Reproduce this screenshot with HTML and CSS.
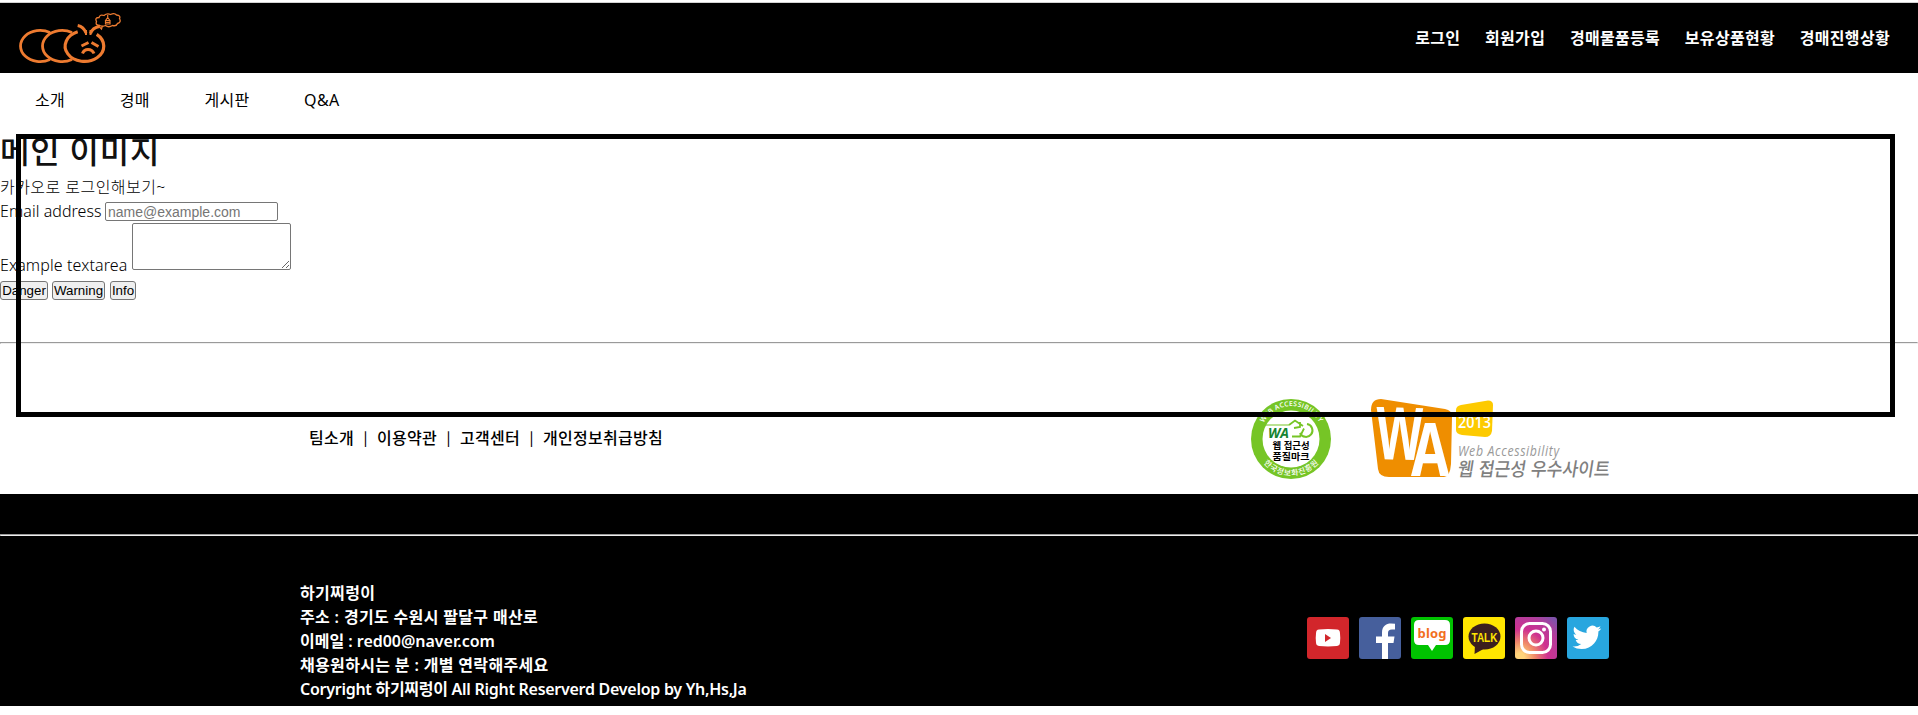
FILE: index.html
```html
<!DOCTYPE html>
<html lang="ko">
<head>
<meta charset="utf-8">
<title>하기찌렁이</title>
<link rel="stylesheet" href="styles.css">
</head>
<body>
<header class="topbar">
  <svg class="logo" width="104" height="56" viewBox="0 0 104 56" fill="none" stroke="#ee7b30" stroke-width="2.8">
    <path d="M32 47.400A19.500 15.600 0 1 1 32 20.600"/>
    <path d="M54 47.400A19.500 15.600 0 1 1 54 20.600"/>
    <path d="M59.700 19.800A19.300 15.300 0 1 0 78.700 22.300" stroke-width="3.200"/>
    <path d="M59.700 13.500q6 1.200 8.300 7.500M81.500 14.500q-7 1-9 7" stroke-width="3"/>
    <path d="M68 18v5M72.500 18v5" stroke-width="2"/>
    <path d="M63.500 34l7-3.500M73.500 30.500l7 4M64.500 41.500c2-5.500 9-5.500 11.500 0" stroke-width="3"/>
    <path d="M82 13.500q-5 0-3.500-4-2-4 2.500-4 1-3.500 5-2 3-2.500 6.500-1 4-2 6 .500 4.500 .500 3 3.500 2 4-2 5-1 3-5 2-4 2.500-7 0-3 1.500-5.500 0M80.500 14l3 3 1-3.500" stroke-width="1.300"/>
    <path d="M87.500 8.500h4.500v3.500h-4.500zM89.700 3v2.500l-2.200 3M89.700 5.500l2.300 3M88 10.300h4" stroke-width="1.200"/>
  </svg>
  <nav class="user-nav"><a>로그인</a><a>회원가입</a><a>경매물품등록</a><a>보유상품현황</a><a>경매진행상황</a></nav>
</header>
<nav class="main-nav"><a>소개</a><a>경매</a><a>게시판</a><a>Q&amp;A</a></nav>
<div class="frame"></div>
<main class="content">
  <h1 class="title">메인 이미지</h1>
  <p class="kakao">카카오로 로그인해보기~</p>
  <div class="row"><label class="email-label">Email address</label><input class="email" type="email" placeholder="name@example.com"></div>
  <div class="row area-row"><label class="area-label">Example textarea</label><textarea class="area"></textarea></div>
  <div class="buttons"><button class="btn danger">Danger</button><button class="btn warning">Warning</button><button class="btn info">Info</button></div>
</main>
<hr class="rule">
<section class="policies">
  <div class="links"><a>팀소개</a><i>|</i><a>이용약관</a><i>|</i><a>고객센터</a><i>|</i><a>개인정보취급방침</a></div>
  <div class="marks">
    <svg class="mark-round" width="80" height="80" viewBox="0 0 80 80">
      <circle cx="40" cy="40" r="40" fill="#76c526"/><circle cx="40" cy="40" r="28.500" fill="#fff"/>
      <path id="arc-top" d="M12.950 53.700A31.500 31.500 0 1 1 69 52" fill="none"/>
      <path id="arc-bottom" d="M9.500 60.500A36.800 36.800 0 0 0 70.500 60.500" fill="none"/>
      <text class="ring"><textPath href="#arc-top" startOffset="31" textLength="68">WEB ACCESSIBILITY</textPath></text>
      <text class="ring ring-ko"><textPath href="#arc-bottom" startOffset="5" textLength="62">한국정보화진흥원</textPath></text>
      <path d="M15 26h23" stroke="#76c526"/>
      <path d="M38 26l6-4.500 8 5.500M49 23v5l-6 1M41 37.500h8l4-8" fill="none" stroke="#76c526" stroke-width="1.800"/>
      <path d="M56 25a6.500 6.500 0 1 1-7 9" fill="none" stroke="#76c526" stroke-width="2"/>
      <text class="wa-small" x="17" y="39" textLength="21" lengthAdjust="spacingAndGlyphs">WA</text>
      <text class="mark-ko" x="21.500" y="50.300" textLength="37" lengthAdjust="spacingAndGlyphs">웹 접근성</text>
      <text class="mark-ko" x="21.500" y="61" textLength="37" lengthAdjust="spacingAndGlyphs">품질마크</text>
    </svg>
    <svg class="mark-site" width="240" height="84" viewBox="0 0 240 84">
      <path d="M10 0L74 10Q81 11 81 18L80 65Q79 78 73 78L18 78Q8 78 7 70L0 11Q0 0 10 0Z" fill="#ef8e00"/>
      <path d="M90 6L117 1.500Q122 1.500 122 6L121 32Q120 38 114 38L91 36Q85 35 85 31V11Q85 7 90 6Z" fill="#fdca00"/>
      <g class="wa-big"><text transform="translate(5 60) scale(.66 1) rotate(1)">W</text><text transform="translate(40 77) scale(.76 1)">A</text></g>
      <text class="year" x="87" y="28.500" textLength="33" lengthAdjust="spacingAndGlyphs">2013</text>
      <text class="site-en" transform="translate(87 57) scale(.88 1)" textLength="115">Web Accessibility</text>
      <text class="site-ko" transform="translate(86 77) skewX(-9)" textLength="152" lengthAdjust="spacingAndGlyphs">웹 접근성 우수사이트</text>
    </svg>
  </div>
</section>
<footer class="footer">
  <hr class="rule footer-rule">
  <div class="footer-body">
    <address class="info-text">
      <div>하기찌렁이</div>
      <div>주소 : 경기도 수원시 팔달구 매산로</div>
      <div class="mail">이메일 : red00@naver.com</div>
      <div>채용원하시는 분 : 개별 연락해주세요</div>
      <div class="copy">Coryright 하기찌렁이 All Right Reserverd Develop by Yh,Hs,Ja</div>
    </address>
    <div class="social">
      <svg viewBox="0 0 42 42"><rect width="42" height="42" rx="3" fill="#d2262b"/><path d="M12 12.500q9-1 18 0 3 0 3 4 .6 5 0 9 0 3-3 3.500-9 .8-18 0-3-.5-3-3.500-.6-4 0-9 0-4 3-4z" fill="#fff"/><path d="M18 17v8l6-4z" fill="#d2262b"/></svg>
      <svg viewBox="0 0 42 42"><rect width="42" height="42" rx="3" fill="#465f9c"/><path d="M23 42V26h-6v-6.500h6V16c0-7 4-9.500 9-9.500l4 .3v5.700h-3c-3 0-4 1.500-4 3.500v3.500h6.500l-1 6.500h-5.500v16z" fill="#fff"/></svg>
      <svg viewBox="0 0 42 42"><rect width="42" height="42" rx="3" fill="#00c300"/><path d="M8 3h26q5 0 5 5v15q0 5-5 5h-9l-4 6-4-6H8q-5 0-5-5V8q0-5 5-5z" fill="#fff"/><text class="blog" x="6.500" y="20.500" textLength="29">blog</text></svg>
      <svg viewBox="0 0 42 42"><rect width="42" height="42" rx="3" fill="#ffe600"/><ellipse cx="21.500" cy="19.500" rx="16" ry="13" fill="#3b1f1e"/><path d="M12 28l-.5 9 9-5z" fill="#3b1f1e"/><text class="talk" x="8.500" y="24.500" textLength="26" lengthAdjust="spacingAndGlyphs">TALK</text></svg>
      <svg viewBox="0 0 42 42"><defs><radialGradient id="insta" cx=".12" cy=".95" r="1.200"><stop offset=".08" stop-color="#ffd47a"/><stop offset=".3" stop-color="#ef876a"/><stop offset=".55" stop-color="#cf3190"/><stop offset=".8" stop-color="#b53c9b"/><stop offset="1" stop-color="#8052aa"/></radialGradient></defs><rect width="42" height="42" rx="3" fill="url(#insta)"/><g fill="none" stroke="#fff" stroke-width="3"><rect x="6.500" y="6.500" width="29" height="29" rx="8"/><circle cx="21" cy="21" r="7"/></g><circle cx="29" cy="12.500" r="2" fill="#fff"/></svg>
      <svg viewBox="0 0 42 42"><rect width="42" height="42" rx="3" fill="#28a6df"/><path transform="translate(5.500 6) scale(1.200)" d="M23.950 4.570a10 10 0 0 1-2.820.77 4.960 4.960 0 0 0 2.160-2.720c-.95.560-2 .960-3.130 1.190a4.920 4.920 0 0 0-8.380 4.480C7.690 8.090 4.070 6.130 1.640 3.160a4.820 4.820 0 0 0-.67 2.480c0 1.710.87 3.210 2.190 4.100a4.900 4.900 0 0 1-2.230-.62v.06a4.920 4.920 0 0 0 3.950 4.830 5 5 0 0 1-2.210.08 4.940 4.940 0 0 0 4.600 3.420A9.870 9.870 0 0 1 0 19.540a13.990 13.990 0 0 0 7.560 2.210c9.050 0 14-7.500 14-13.980 0-.210 0-.420-.02-.630a9.940 9.940 0 0 0 2.410-2.570z" fill="#fff"/></svg>
    </div>
  </div>
</footer>
</body>
</html>
```
FILE: styles.css
```css
* { box-sizing: border-box; }
body { margin: 0; height: 715px; overflow: hidden; background: #fff; color: #000; font: 16px/24px "Noto Sans", "Noto Sans CJK KR", sans-serif; border-top: 2px solid #fff; }
.topbar { height: 71px; background: #000; border-top: 1px solid #d2d2d2; display: flex; justify-content: space-between; padding: 9px 28px 0 18px; }
.logo { display: block; }
.user-nav { display: flex; gap: 24.7px; padding-top: 13px; color: #fff; font-weight: 700; letter-spacing: .32px; font-family: "Noto Sans CJK KR", sans-serif; }
.main-nav { height: 61px; display: flex; gap: 54.7px; padding: 15px 35px; font-weight: 400; letter-spacing: .28px; }
.frame { position: absolute; z-index: 2; left: 16px; top: 134px; width: 1879px; height: 283px; border: 5px solid #000; pointer-events: none; }
.content { height: 207px; font-weight: 300; }
.title { margin: 0; height: 40px; font-size: 32px; line-height: 34px; font-weight: 500; letter-spacing: .8px; color: #111; }
.kakao { margin: 0; height: 25px; letter-spacing: .45px; line-height: 26px; }
.row { display: flex; height: 24px; align-items: flex-start; }
.email-label { width: 105px; letter-spacing: .05px; }
.area-label { width: 132px; padding-top: 30px; letter-spacing: .12px; }
.email { width: 173px; height: 19px; margin-top: 3px; padding: 1px 2px; border: 1px solid #767676; border-radius: 2px; font: 14px Arial, "Liberation Sans", sans-serif; }
.area-row { height: 56px; }
.area { width: 159px; height: 47px; padding: 2px; border: 1px solid #767676; border-radius: 2px; }
.buttons { display: flex; padding-top: 2px; }
.btn { height: 19px; padding: 0; border: 1px solid #767676; border-radius: 3px; background: #efefef; font: 13.333px/15px "Liberation Sans", Arial, sans-serif; color: #000; }
.danger { width: 48px; margin-right: 4px; }
.warning { width: 53px; margin-right: 5px; }
.info { width: 26px; }
.rule { margin: 1px 0 0; height: 2px; border: 1px solid; border-color: #9a9a9a #eee #eee #9a9a9a; }
.policies { height: 150px; display: flex; justify-content: space-between; padding: 55px 307px 0 309px; }
.links { display: flex; padding-top: 26px; font-weight: 500; letter-spacing: .28px; font-family: "Noto Sans CJK KR", sans-serif; }
.links i { width: 23px; text-align: center; font-style: normal; font-size: 14px; }
.marks { display: flex; gap: 40px; }
.marks svg { overflow: visible; }
.ring { font: 600 6.8px "Open Sans", sans-serif; fill: #fff; }
.ring-ko { font: 500 7.8px "Noto Sans CJK KR", sans-serif; }
.wa-small { font: italic 700 15px "Open Sans", sans-serif; fill: #168431; }
.mark-ko { font: 700 9.500px "Noto Sans CJK KR", sans-serif; fill: #000; }
.wa-big { font: 700 73px "Open Sans", sans-serif; fill: #fff; }
.year { font: 600 16px "Open Sans", sans-serif; fill: #fff; }
.site-en { font: italic 14px "Open Sans", sans-serif; fill: #999; }
.site-ko { font: 500 19px "Noto Sans CJK KR", sans-serif; fill: #808080; }
.footer { height: 212px; background: #000; color: #fff; padding-top: 40px; }
.footer-rule { margin: 0; }
.footer-body { display: flex; justify-content: space-between; padding: 38px 309px 0 300px; }
.info-text { font-style: normal; font-weight: 600; letter-spacing: .34px; padding-top: 7px; }
.mail { letter-spacing: -.02px; }
.copy { letter-spacing: -.27px; }
.social { display: flex; gap: 10px; padding-top: 43px; }
.social svg { width: 42px; height: 42px; }
.blog { font: 700 13px "Noto Sans", sans-serif; fill: #f2701d; }
.talk { font: 700 12px "Liberation Sans", sans-serif; fill: #ffe600; }
```
